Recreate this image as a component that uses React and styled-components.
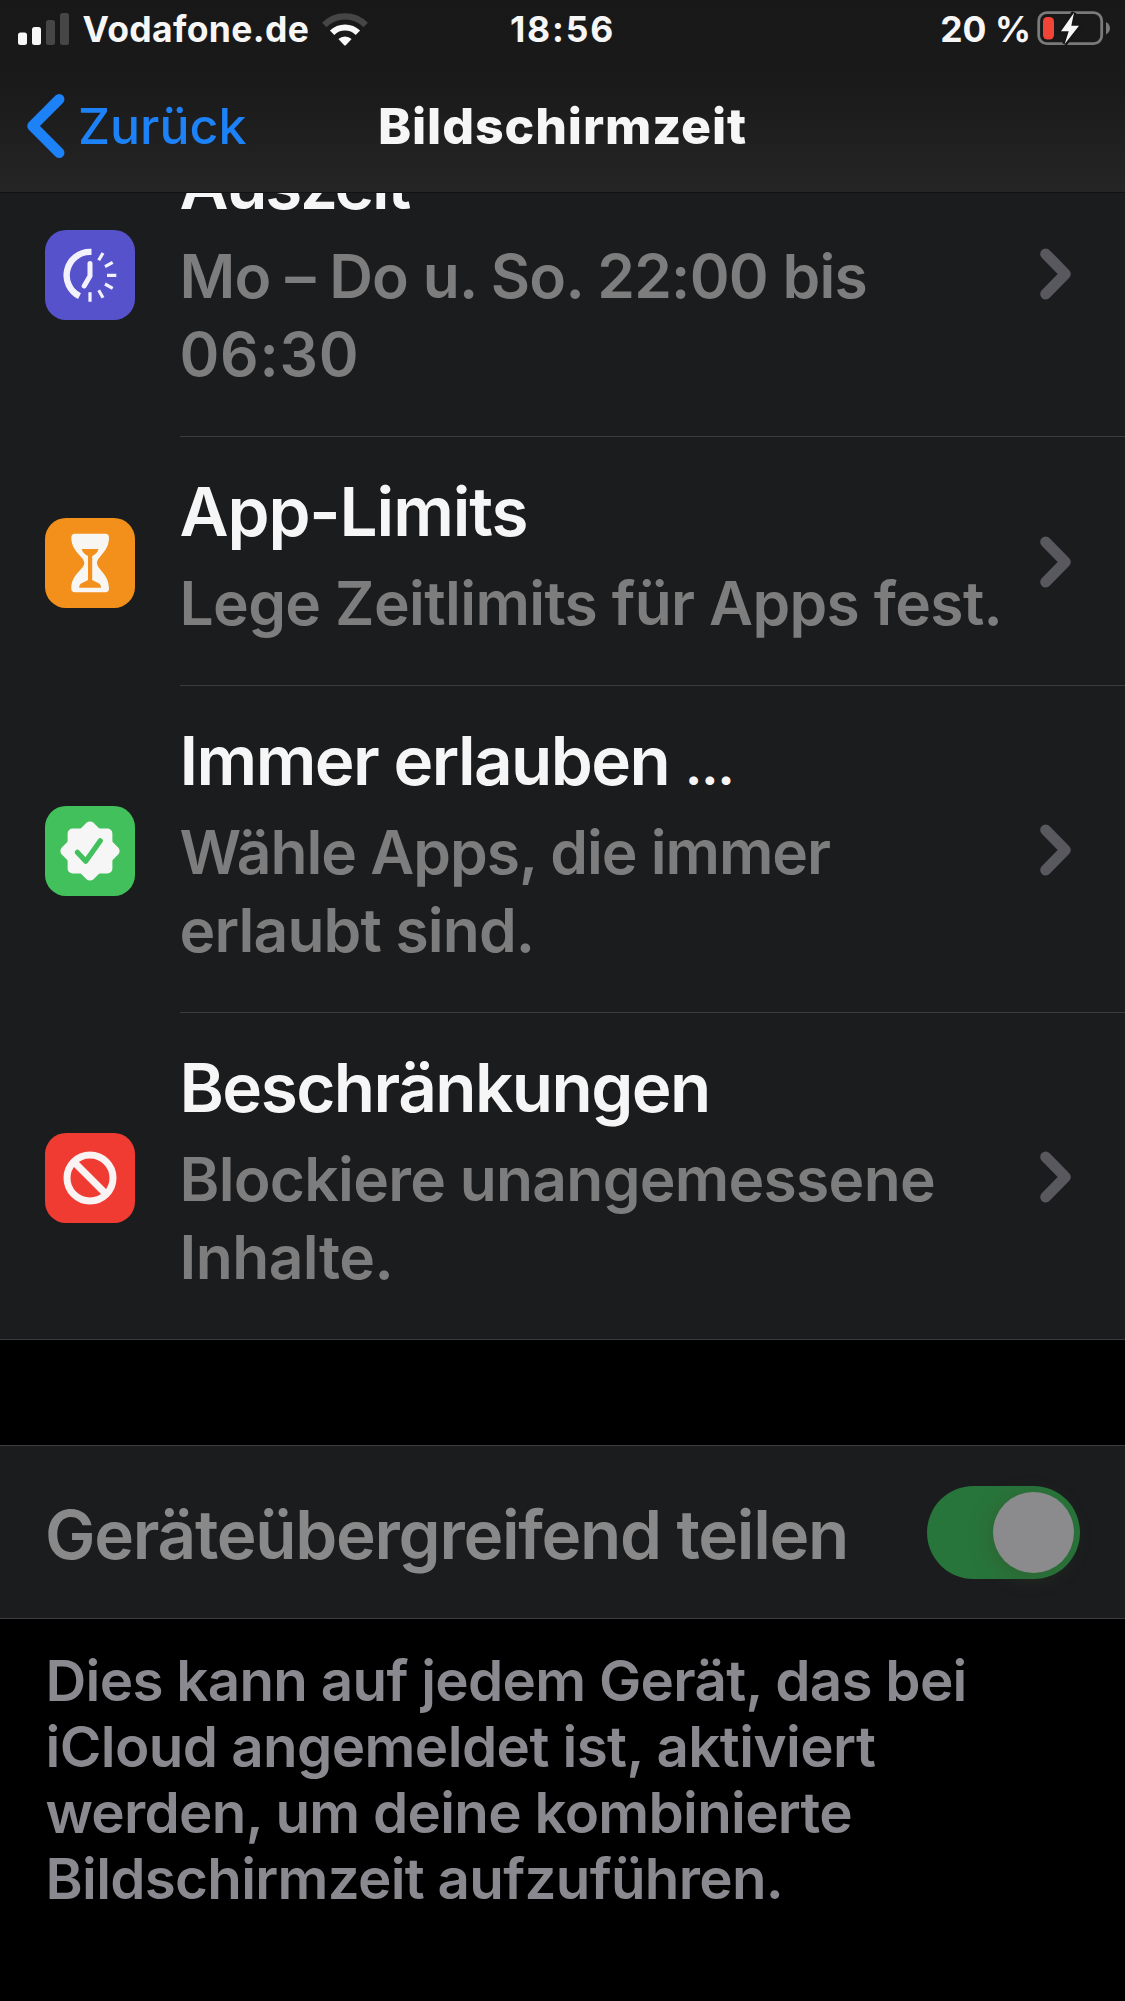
import React from 'react'
import styled, { createGlobalStyle } from 'styled-components'

const entries = [
  {
    id: 'downtime',
    color: '#5552cb',
    icon: <DowntimeIcon />,
    title: 'Auszeit',
    track: -2.3,
    lines: [
      { text: 'Mo – Do u. So. 22:00 bis', track: -0.75 },
      { text: '06:30', track: 0.7 },
    ],
  },
  {
    id: 'limits',
    color: '#f2901b',
    icon: <HourglassIcon />,
    title: 'App-Limits',
    track: -1.1,
    lines: [{ text: 'Lege Zeitlimits für Apps fest.', track: -0.65 }],
  },
  {
    id: 'allowed',
    color: '#41c05b',
    icon: <BadgeIcon />,
    title: 'Immer erlauben ',
    more: true,
    track: -1.6,
    lines: [
      { text: 'Wähle Apps, die immer', track: -1.03 },
      { text: 'erlaubt sind.', track: -0.85 },
    ],
  },
  {
    id: 'restrictions',
    color: '#f03b33',
    icon: <ProhibitIcon />,
    title: 'Beschränkungen',
    track: -1.55,
    lines: [
      { text: 'Blockiere unangemessene', track: -0.73 },
      { text: 'Inhalte.', track: -0.55 },
    ],
  },
]

const footnote = [
  { text: 'Dies kann auf jedem Gerät, das bei', track: -0.7 },
  { text: 'iCloud angemeldet ist, aktiviert', track: -0.58 },
  { text: 'werden, um deine kombinierte', track: -0.7 },
  { text: 'Bildschirmzeit aufzuführen.', track: -0.7 },
]

export default function App() {
  return (
    <Page>
      <GlobalStyle />
      <Header>
        <StatusBar>
          <StatusLeft>
            <SignalIcon />
            <StatusText $track={0.35}>Vodafone.de</StatusText>
            <WifiIcon />
          </StatusLeft>
          <StatusTime $track={1.8}>18:56</StatusTime>
          <StatusRight>
            <StatusText $track={0}>20 %</StatusText>
            <BatteryIcon />
          </StatusRight>
        </StatusBar>
        <NavBar>
          <BackButton>
            <BackChevron />
            Zurück
          </BackButton>
          <NavTitle>Bildschirmzeit</NavTitle>
        </NavBar>
      </Header>

      <List>
        {entries.map((entry) => (
          <Row key={entry.id}>
            <IconTile $color={entry.color}>{entry.icon}</IconTile>
            <RowBody>
              <RowText>
                <RowTitle $track={entry.track}>
                  {entry.title}
                  {entry.more && <Ellipsis>…</Ellipsis>}
                </RowTitle>
                {entry.lines.map((line) => (
                  <RowLine key={line.text} $track={line.track}>{line.text}</RowLine>
                ))}
              </RowText>
              <RowChevron />
            </RowBody>
          </Row>
        ))}
      </List>

      <ShareRow>
        <ShareLabel>Geräteübergreifend teilen</ShareLabel>
        <Toggle>
          <Thumb />
        </Toggle>
      </ShareRow>

      <Footnote>
        {footnote.map((line) => (
          <FootnoteLine key={line.text} $track={line.track}>{line.text}</FootnoteLine>
        ))}
      </Footnote>
    </Page>
  )
}

function SignalIcon() {
  return (
    <svg width="52" height="34" viewBox="0 0 52 34">
      <g fill="#f8f8f8">
        <rect x="0" y="20.5" width="9" height="12.5" rx="2.5" />
        <rect x="14" y="15" width="9" height="18" rx="2.5" />
      </g>
      <g fill="#464646">
        <rect x="28" y="8" width="9" height="25" rx="2.5" />
        <rect x="42" y="1" width="9" height="32" rx="2.5" />
      </g>
    </svg>
  )
}

function WifiIcon() {
  return (
    <svg width="46" height="34" viewBox="0 0 46 34" fill="none" strokeWidth="6.2">
      <path d="M2.3 13A29.3 29.3 0 0 1 43.7 13" stroke="#464646" />
      <path d="M10.1 20.8A18.3 18.3 0 0 1 35.9 20.8" stroke="#f8f8f8" />
      <path d="M16.4 27.1A9.4 9.4 0 0 1 29.6 27.1L24 32.9Q23 33.9 22 32.9Z" fill="#f8f8f8" />
    </svg>
  )
}

function BatteryIcon() {
  return (
    <svg width="74" height="36" viewBox="0 0 74 36">
      <rect x="1.7" y="1.7" width="63" height="31" rx="8" fill="none" stroke="#7a7a7b" strokeWidth="2.8" />
      <path d="M69 11Q73 13.5 73 17.2T69 23.5Z" fill="#7a7a7b" />
      <rect x="6" y="6" width="11" height="22.5" rx="4.5" fill="#f24537" />
      <path
        d="M37 1.8L24 20.3H31.7L27.7 33L42 14.7H34.3Z"
        fill="#f8f8f8"
        stroke="#171717"
        strokeWidth="5"
        paintOrder="stroke"
      />
    </svg>
  )
}

function BackChevron() {
  return (
    <svg width="40" height="68" viewBox="0 0 40 68" fill="none">
      <path d="M33.2 7.3L6.5 34L33.2 60.7" stroke="#1d82f7" strokeWidth="10.5" strokeLinecap="round" strokeLinejoin="round" />
    </svg>
  )
}

function RowChevron() {
  return (
    <svg width="32" height="52" viewBox="0 0 32 52" fill="none">
      <path d="M5.7 6L25.3 26L5.7 46" stroke="#59585e" strokeWidth="11" strokeLinecap="round" strokeLinejoin="round" />
    </svg>
  )
}

function DowntimeIcon() {
  return (
    <svg width="90" height="90" viewBox="0 0 90 90" fill="none" stroke="#f3f2fc">
      <path d="M46.5 21.9H45A23.4 23.4 0 0 0 34.5 66.2" strokeWidth="6.4" />
      <path d="M45 33.5V46L39.2 56" strokeWidth="5" strokeLinecap="round" strokeLinejoin="round" />
      <path
        d="M53.7 30.3L58 23M60 36.7L67.7 32.3M62 45.3H71.3M60 54L67.7 58.3M53.7 60.3L58 67.7M45 62.3V71.7"
        strokeWidth="3.2"
      />
    </svg>
  )
}

function HourglassIcon() {
  return (
    <svg width="90" height="90" viewBox="0 0 90 90">
      <path
        d="M30 15.7H60.4Q64 15.7 64 19.5C64 34 52 38.5 52 45C52 51.5 64 56 64 70.5Q64 74.3 60.4 74.3H30Q26.3 74.3 26.3 70.5C26.3 56 39.3 51.5 39.3 45C39.3 38.5 26.3 34 26.3 19.5Q26.3 15.7 30 15.7Z"
        fill="#f8f6f2"
      />
      <path
        d="M36.8 31H53.4Q53 35 47.2 38V62L54.5 65.8Q56 66.8 56 69.7H34.2Q34.2 66.8 35.7 65.8L43 62V38Q37.2 35 36.8 31Z"
        fill="#f2901b"
      />
    </svg>
  )
}

function BadgeIcon() {
  return (
    <svg width="90" height="90" viewBox="0 0 90 90">
      <g fill="#f6f6f6">
        <rect x="22.6" y="22.6" width="44.8" height="44.8" rx="5" />
        <rect x="22.6" y="22.6" width="44.8" height="44.8" rx="5" transform="rotate(45 45 45)" />
      </g>
      <path
        d="M32.3 46.3L40.7 55.2L55.3 34.8"
        fill="none"
        stroke="#41c05b"
        strokeWidth="5.2"
        strokeLinecap="round"
        strokeLinejoin="round"
      />
    </svg>
  )
}

function ProhibitIcon() {
  return (
    <svg width="90" height="90" viewBox="0 0 90 90" fill="none" stroke="#f9f3f3" strokeWidth="7">
      <circle cx="45" cy="45" r="23" />
      <path d="M29 29L61 61" />
    </svg>
  )
}

const GlobalStyle = createGlobalStyle`
  * {
    box-sizing: border-box;
  }
  body {
    margin: 0;
    background: #000;
  }
  svg {
    display: block;
    flex-shrink: 0;
  }
`

const Page = styled.div`
  display: flex;
  flex-direction: column;
  width: 1125px;
  height: 2001px;
  overflow: hidden;
  background: #000;
  color: #f6f6f6;
  font-family: Inter, 'Liberation Sans', sans-serif;
  font-weight: 600;
  white-space: nowrap;
`

const Header = styled.header`
  flex-shrink: 0;
  height: 193px;
  background: linear-gradient(#181818, #1a1a1b 45%, #252526);
  border-bottom: 1px solid #111213;
  z-index: 1;
`

const StatusBar = styled.div`
  display: grid;
  grid-template-columns: 1fr auto 1fr;
  align-items: center;
  height: 58px;
  padding: 0 14px 0 18px;
`

const StatusLeft = styled.div`
  display: flex;
  align-items: center;
  gap: 12.5px;
`

const StatusRight = styled(StatusLeft)`
  justify-content: flex-end;
  gap: 6px;
`

const StatusText = styled.span`
  padding-top: 2px;
  font-size: 35.5px;
  font-weight: 650;
  line-height: 56px;
  letter-spacing: ${(p) => p.$track}px;
`

const StatusTime = styled(StatusText)`
  margin-right: 4px;
`

const NavBar = styled.nav`
  display: grid;
  grid-template-columns: 1fr auto 1fr;
  align-items: center;
  height: 134px;
  padding: 5px 26px 3px;
  font-size: 50px;
  line-height: 60px;
`

const BackButton = styled.a`
  display: flex;
  align-items: center;
  gap: 12px;
  color: #1d82f7;
  font-weight: 550;
`

const NavTitle = styled.h1`
  margin: 0;
  font-size: inherit;
  font-weight: 800;
  letter-spacing: 0.9px;
`

const List = styled.main`
  flex-shrink: 0;
  /* scrolled so that the first row runs under the header */
  margin-top: -83px;
  background: #1b1c1e;
  border-bottom: 1px solid #3c3c3f;
`

const Row = styled.section`
  display: flex;
  align-items: center;
  padding-left: 45px;
`

const IconTile = styled.div`
  width: 90px;
  height: 90px;
  margin-top: 3px;
  border-radius: 21px;
  background: ${(p) => p.$color};
`

const RowBody = styled.div`
  flex: 1;
  display: flex;
  align-items: center;
  justify-content: space-between;
  margin-left: 45px;
  padding: 34.5px 53.5px 43.5px 0;
  border-bottom: 1px solid #3c3c3f;

  ${Row}:last-child & {
    border-bottom: none;
  }

  & > svg {
    margin-top: 10px;
  }
`

const RowText = styled.div`
  margin-left: -0.5px;
`

const RowTitle = styled.h2`
  margin: 0 0 12px;
  font-size: 67.4px;
  font-weight: 600;
  line-height: 80px;
  letter-spacing: ${(p) => p.$track}px;
`

const Ellipsis = styled.span`
  margin-left: 1px;
  font-size: 43.5px;
  font-weight: 900;
  line-height: 1;
`

const RowLine = styled.div`
  color: #7d7d7d;
  font-size: 60.5px;
  line-height: 78px;
  letter-spacing: ${(p) => p.$track}px;
`

const ShareRow = styled.section`
  flex-shrink: 0;
  display: flex;
  align-items: center;
  justify-content: space-between;
  height: 174px;
  margin-top: 105px;
  padding: 0 45px;
  background: #1b1c1e;
  border-top: 1px solid #3c3c3f;
  border-bottom: 1px solid #3c3c3f;
`

const ShareLabel = styled.span`
  padding-top: 6px;
  color: #898989;
  font-size: 67.4px;
  line-height: 80px;
  letter-spacing: -1.3px;
`

const Toggle = styled.div`
  display: flex;
  align-items: center;
  justify-content: flex-end;
  width: 153px;
  height: 93px;
  padding: 6px;
  border-radius: 47px;
  background: #28753b;
`

const Thumb = styled.div`
  width: 81px;
  height: 81px;
  border-radius: 50%;
  background: #8b8a8c;
  box-shadow: -4px 4px 20px rgba(50, 80, 40, 0.45);
`

const Footnote = styled.footer`
  padding: 28.8px 45.5px 0;
`

const FootnoteLine = styled.div`
  color: #8a898f;
  font-size: 56.5px;
  line-height: 66px;
  letter-spacing: ${(p) => p.$track}px;
`
